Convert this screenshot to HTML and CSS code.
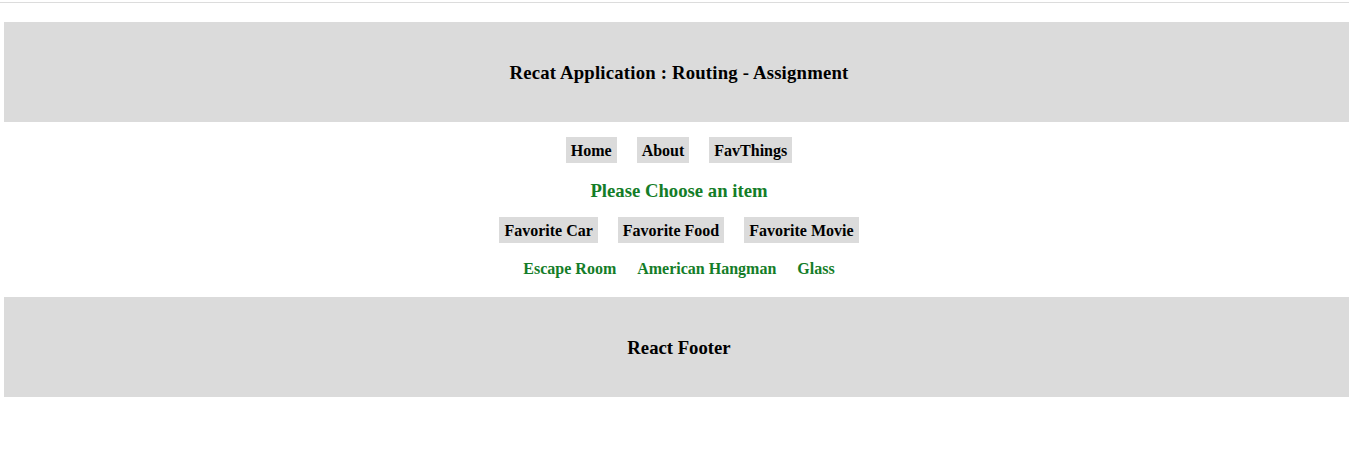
FILE: index.html
```html
<!DOCTYPE html>
<html>
<head>
<meta charset="utf-8">
<title>Recat Application</title>
<link rel="stylesheet" href="styles.css">
</head>
<body>
<div class="topline"></div>
<div class="page">
  <header class="header">
    <h3 class="heading heading-wide">Recat Application : Routing - Assignment</h3>
  </header>
  <nav class="nav">
    <a class="btn" href="#">Home</a>
    <a class="btn" href="#">About</a>
    <a class="btn" href="#">FavThings</a>
  </nav>
  <h3 class="title">Please Choose an item</h3>
  <div class="nav fav">
    <a class="btn" href="#">Favorite Car</a>
    <a class="btn" href="#">Favorite Food</a>
    <a class="btn" href="#">Favorite Movie</a>
  </div>
  <ul class="items">
    <li class="item">Escape Room</li>
    <li class="item">American Hangman</li>
    <li class="item">Glass</li>
  </ul>
  <footer class="footer">
    <h3 class="heading">React Footer</h3>
  </footer>
</div>
</body>
</html>
```
FILE: styles.css
```css
html, body {
  margin: 0;
  padding: 0;
  background: #fff;
  overflow-x: hidden;
}
body {
  font-family: "Liberation Serif", "Times New Roman", serif;
  color: #000;
}
.topline {
  margin-top: 2px;
  height: 1px;
  background: #dcdcdc;
}
.page {
  width: 1350px;
  margin-left: 4px;
  margin-top: 19px;
}
.header, .footer {
  height: 100px;
  box-sizing: border-box;
  padding-top: 2px;
  background: #dbdbdb;
  display: flex;
  align-items: center;
  justify-content: center;
}
.heading {
  margin: 0;
  font-size: 18.72px;
  font-weight: bold;
  line-height: 22px;
}
.heading-wide {
  letter-spacing: 0.2px;
}
.nav {
  margin-top: 15px;
  display: flex;
  justify-content: center;
  gap: 20px;
}
.btn {
  display: block;
  background: #dbdbdb;
  padding: 5px 5px 3px;
  line-height: 18px;
  font-size: 16px;
  font-weight: bold;
  color: #000;
  text-decoration: none;
}
.title {
  margin: 17px 0 0;
  text-align: center;
  font-size: 18.72px;
  line-height: 22px;
  color: #147d28;
}
.items {
  list-style: none;
  margin: 17px 0 0;
  padding: 0;
  display: flex;
  justify-content: center;
  gap: 21px;
}
.item {
  font-size: 16px;
  line-height: 18px;
  font-weight: bold;
  color: #147d28;
}
.footer {
  margin-top: 19px;
}
```
